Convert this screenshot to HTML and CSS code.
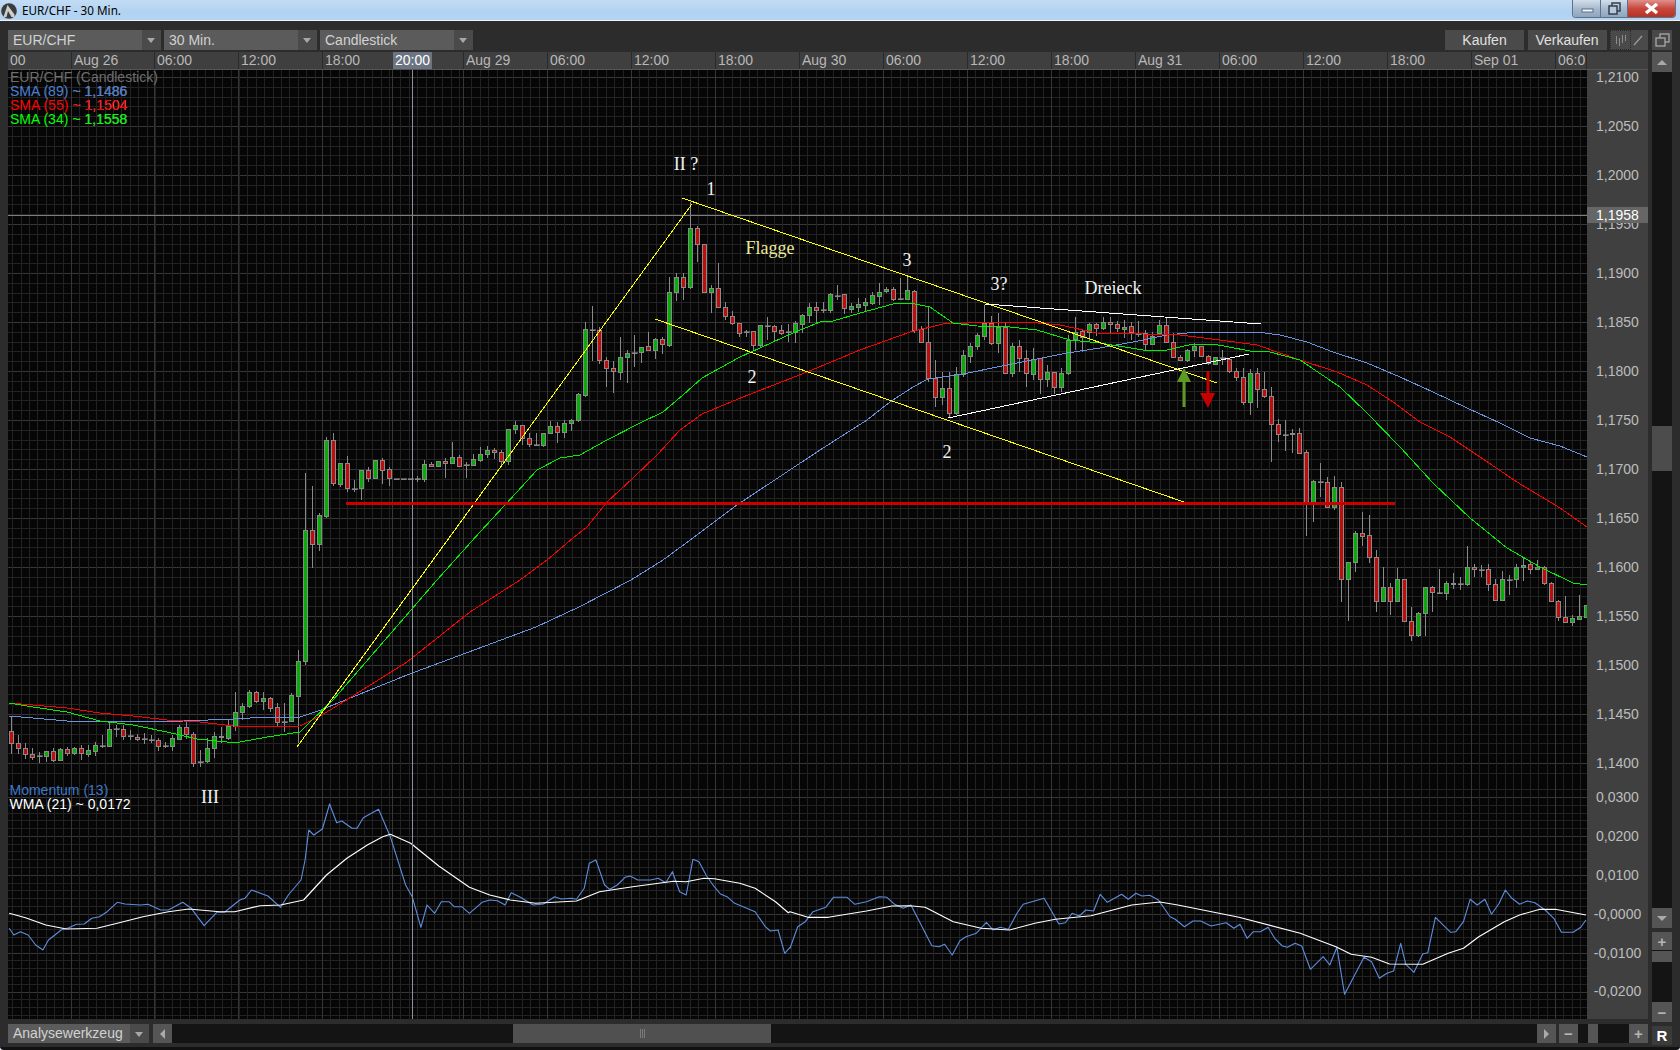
FILE: index.html
```html
<!DOCTYPE html>
<html lang="de">
<head>
<meta charset="utf-8">
<title>EUR/CHF - 30 Min.</title>
<link rel="stylesheet" href="styles.css">
</head>
<body>
<div class="window">
  <header class="titlebar">
    <svg class="logo" viewBox="0 0 16 16" width="16" height="16"><circle cx="8" cy="8" r="7.8" fill="#3c3c3c"/><path d="M2.5 14 L6.5 2 L13.5 11.5 L13.5 14 L10.5 14 L7 8 L5.5 14 Z" fill="#cfcfcf"/></svg>
    <span class="title-text">EUR/CHF - 30 Min.</span>
    <div class="win-buttons">
      <div class="win-btn win-min"><svg viewBox="0 0 28 17" width="28" height="17"><rect x="9" y="9" width="11" height="3" fill="#f4f7fb" stroke="#5b6d82"/></svg></div>
      <div class="win-btn win-max"><svg viewBox="0 0 27 17" width="27" height="17"><rect x="11" y="3" width="8" height="8" fill="none" stroke="#33404f" stroke-width="1.5"/><rect x="8" y="6" width="8" height="8" fill="#b8c8dc" stroke="#33404f" stroke-width="1.5"/></svg></div>
      <div class="win-btn win-close"><svg viewBox="0 0 47 17" width="47" height="17"><path d="M18 4 L29 13 M29 4 L18 13" stroke="#fff" stroke-width="3.4"/></svg></div>
    </div>
  </header>

  <div class="frame">
    <main class="main-col">
      <div class="toolbar">
        <div class="select"><span class="select-value">EUR/CHF</span><span class="select-arrow"></span></div>
        <div class="select"><span class="select-value">30 Min.</span><span class="select-arrow"></span></div>
        <div class="select"><span class="select-value">Candlestick</span><span class="select-arrow"></span></div>
        <div class="toolbar-space"></div>
        <button class="action-btn">Kaufen</button>
        <button class="action-btn">Verkaufen</button>
        <div class="mode-group">
          <span class="mode mode-on"><svg viewBox="0 0 20 20" width="20" height="20"><path d="M6.5 6v8M9.5 8v8M12.5 5v8M15.5 5v6" stroke="#8c8c8c"/></svg></span>
          <span class="mode"><svg viewBox="0 0 16 20" width="16" height="20"><path d="M3 15 L11 6" stroke="#9a9a9a" stroke-width="1.3"/></svg></span>
        </div>
      </div>

      <section class="chart">
        <div class="timebar">
          <div class="time-cells">
            <span class="tc tc-first">00</span>
            <span class="tc tc-83">Aug 26</span>
            <span class="tc">06:00</span>
            <span class="tc">12:00</span>
            <span class="tc tc-wide">18:00</span>
            <span class="tc">Aug 29</span>
            <span class="tc">06:00</span>
            <span class="tc">12:00</span>
            <span class="tc">18:00</span>
            <span class="tc">Aug 30</span>
            <span class="tc">06:00</span>
            <span class="tc">12:00</span>
            <span class="tc">18:00</span>
            <span class="tc">Aug 31</span>
            <span class="tc">06:00</span>
            <span class="tc">12:00</span>
            <span class="tc">18:00</span>
            <span class="tc">Sep 01</span>
            <span class="tc tc-last">06:0</span>
          </div>
          <span class="cross-time">20:00</span>
        </div>

        <div class="plot">
          <svg id="chart" class="chart-svg" viewBox="8 70 1579 949" width="1579" height="949"></svg>
          <div class="legend legend-price">
            <div class="lg-grey">EUR/CHF (Candlestick)</div>
            <div class="lg-blue">SMA (89) <span class="lg-val">~ 1,1486</span></div>
            <div class="lg-red">SMA (55) <span class="lg-val">~ 1,1504</span></div>
            <div class="lg-green">SMA (34) <span class="lg-val">~ 1,1558</span></div>
          </div>
          <div class="legend legend-mom">
            <div class="lg-mom">Momentum (13)</div>
            <div class="lg-white">WMA (21) ~ 0,0172</div>
          </div>
          <span class="note note-ii">II ?</span>
          <span class="note note-1">1</span>
          <span class="note note-flagge">Flagge</span>
          <span class="note note-3">3</span>
          <span class="note note-3q">3?</span>
          <span class="note note-dreieck">Dreieck</span>
          <span class="note note-2a">2</span>
          <span class="note note-2b">2</span>
          <span class="note note-iii">III</span>
        </div>

        <aside class="axis">
          <div class="tick">1,2100</div><div class="tick">1,2050</div><div class="tick">1,2000</div>
          <div class="tick">1,1950</div><div class="tick">1,1900</div><div class="tick">1,1850</div>
          <div class="tick">1,1800</div><div class="tick">1,1750</div><div class="tick">1,1700</div>
          <div class="tick">1,1650</div><div class="tick">1,1600</div><div class="tick">1,1550</div>
          <div class="tick">1,1500</div><div class="tick">1,1450</div><div class="tick tick-end">1,1400</div>
          <div class="tick-mom tick-mom-first">0,0300</div><div class="tick-mom">0,0200</div>
          <div class="tick-mom">0,0100</div><div class="tick-mom">-0,0000</div>
          <div class="tick-mom">-0,0100</div><div class="tick-mom">-0,0200</div>
          <span class="cross-price">1,1958</span>
        </aside>
      </section>

      <div class="bottombar">
        <div class="select select-tool"><span class="select-value">Analysewerkzeug</span><span class="select-arrow"></span></div>
        <span class="sq-btn"><i class="tri tri-left"></i></span>
        <div class="h-track"><div class="h-thumb"><i class="grip"></i></div></div>
        <span class="sq-btn"><i class="tri tri-right"></i></span>
        <span class="sq-btn sq-sign">−</span>
        <div class="mini-track"><div class="mini-thumb"></div></div>
        <span class="sq-btn sq-sign">+</span>
      </div>
    </main>

    <aside class="rail">
      <span class="rail-btn rail-restore"><svg viewBox="0 0 20 20" width="20" height="20"><rect x="8" y="4" width="9" height="8" fill="none" stroke="#a8a8a8" stroke-width="1.3"/><rect x="4" y="8" width="9" height="8" fill="#484848" stroke="#a8a8a8" stroke-width="1.3"/></svg></span>
      <span class="rail-btn rail-up"><i class="tri tri-up"></i></span>
      <div class="v-track"><div class="v-thumb"></div></div>
      <span class="rail-btn rail-down"><i class="tri tri-down"></i></span>
      <span class="rail-btn rail-plus sq-sign">+</span>
      <div class="zoom-track"><div class="zoom-thumb"></div></div>
      <span class="rail-btn sq-sign">−</span>
      <span class="rail-btn rail-r">R</span>
    </aside>
  </div>
</div>
<script src="chart.js"></script>
</body>
</html>
```
FILE: styles.css
```css
* { box-sizing: border-box; }
html, body { margin: 0; padding: 0; height: 100%; background: #dfe9f5; overflow: hidden; }
body { font-family: "Liberation Sans", Arial, sans-serif; font-size: 14px; }
.window { width: 1680px; height: 1050px; display: flex; flex-direction: column; }

.titlebar { height: 21px; flex: none; display: flex; align-items: flex-start; position: relative;
  background: linear-gradient(#c3dcf5, #b1d2f1 60%, #b6d5f2); border-bottom: 1px solid #eef4fb; }
.logo { margin: 3px 0 0 1px; flex: none; }
.title-text { font-family: "Noto Sans", sans-serif; font-size: 11.7px; line-height: 20px; margin-left: 5px; color: #000; }
.win-buttons { margin-left: auto; margin-right: 4px; display: flex; height: 18px;
  border: 1px solid #5f7288; border-top: 0; border-radius: 0 0 4px 4px; overflow: hidden; }
.win-btn { height: 17px; display: block; flex: none; }
.win-btn svg { display: block; }
.win-min { background: linear-gradient(#d3dfec, #a7bacf 50%, #8ea5bd); border-right: 1px solid #5f7288; width: 28px; }
.win-max { background: linear-gradient(#d3dfec, #a7bacf 50%, #8ea5bd); border-right: 1px solid #5f7288; width: 27px; }
.win-close { background: linear-gradient(#e0908a, #c8473d 50%, #b53225); width: 47px; }

.frame { flex: 1; display: flex; gap: 4px; padding: 9px 8px 0 8px; background: #2c2c2c;
  border-radius: 0 0 4px 4px; border-bottom: 3px solid #111; min-height: 0; }
.main-col { width: 1640px; display: flex; flex-direction: column; flex: none; }

.toolbar { height: 20px; display: flex; gap: 3.5px; flex: none; margin-bottom: 2px; }
.select { width: 152.5px; height: 20px; display: flex; background: #5b5b5b; color: #d2d2d2; flex: none; }
.select-value { flex: 1; padding-left: 5px; line-height: 20px; white-space: nowrap; overflow: hidden; }
.select-arrow { width: 19px; background: #4a4a4a; position: relative; flex: none; }
.select-arrow::after { content: ""; position: absolute; left: 5px; top: 8px; border: 4px solid transparent; border-top: 5px solid #a8a8a8; border-bottom: 0; }
.toolbar-space { flex: 1; }
.action-btn { width: 79px; height: 20px; padding: 0; border: 0; background: #4a4a4a; color: #e0e0e0;
  font: 14px/20px "Liberation Sans", Arial, sans-serif; }
.mode-group { width: 38px; height: 20px; display: flex; background: #4a4a4a; }
.mode { height: 20px; display: block; }
.mode svg { display: block; }
.mode-on { width: 21px; outline: 1px dotted #2a2a2a; outline-offset: -1px; }

.chart { display: grid; grid-template-columns: 1579px 61px; grid-template-rows: 17px 949px; row-gap: 1px; background: #555; flex: none; }
.timebar { grid-column: 1 / 3; background: #3f3f3f; position: relative; color: #b8b8b8; overflow: hidden; }
.time-cells { width: 1579px; display: flex; }
.tc { width: 84px; height: 17px; flex: none; line-height: 17px; padding-left: 2px; border-left: 1px solid #2a2a2a; white-space: nowrap; }
.tc-first { width: 63px; border-left: 0; }
.tc-83 { width: 83px; }
.tc-wide { width: 141px; }
.tc-last { width: 32px; border-right: 1px solid #2a2a2a; }
.cross-time { position: absolute; left: 385px; top: 0; width: 39px; height: 17px; line-height: 17px; text-align: center; background: #6b7480; color: #fff; }

.plot { position: relative; width: 1579px; height: 949px; background: #060606; overflow: hidden; }
.chart-svg { display: block; }
.axis { position: relative; background: #404040; color: #bdbdbd; text-align: center; overflow: hidden; }
.tick { height: 49px; line-height: 14px; }
.tick-end { height: 14px; margin-bottom: 20px; }
.tick-mom { height: 38.9px; line-height: 14px; }
.cross-price { position: absolute; left: 0; right: 0; top: 137px; height: 16px; line-height: 16px; background: #666; color: #fff; }

.g-minor { stroke: #222222; stroke-width: 1; shape-rendering: crispEdges; }
.g-major { stroke: #363636; stroke-width: 1; shape-rendering: crispEdges; }
.cross { stroke: #8b929c; stroke-width: 1; shape-rendering: crispEdges; }
.cross-h { stroke: #7d7d7d; stroke-width: 1; shape-rendering: crispEdges; }
.wick { stroke: #8a8a8a; stroke-width: 1; shape-rendering: crispEdges; }
.body-g { fill: #07ad07; stroke: #8a8a8a; stroke-width: 1; shape-rendering: crispEdges; }
.body-r { fill: #bd0d0d; stroke: #8a8a8a; stroke-width: 1; shape-rendering: crispEdges; }
.body-d { fill: #8a8a8a; stroke: #8a8a8a; stroke-width: .6; shape-rendering: crispEdges; }
.ln { fill: none; stroke-width: 1; shape-rendering: crispEdges; stroke-linejoin: round; }
.ln-blue { stroke: #6a93dc; }
.ln-red { stroke: #ff0000; }
.ln-green { stroke: #00f000; }
.ln-yellow { stroke: #ffff00; }
.ln-white { stroke: #ffffff; }
.ln-wma { stroke: #ffffff; stroke-width: 1.15; shape-rendering: auto; }
.ln-mom { stroke: #5f8ede; shape-rendering: auto; stroke-width: 1.1; }
.hline-red { stroke: #c90000; stroke-width: 3; shape-rendering: crispEdges; }
.arrow-green { fill: #5c9a26; }
.arrow-red { fill: #c60000; }

.legend { position: absolute; left: 2px; line-height: 14px; white-space: nowrap; }
.legend-price { top: 0; }
.legend-mom { top: 713px; left: 1.5px; }
.lg-grey { color: #6e6e6e; }
.lg-blue { color: #4d80d2; }
.lg-red { color: #ff0000; }
.lg-green { color: #00ff00; }
.lg-val { text-shadow: .5px 0 0 rgba(255,255,255,.45); }
.lg-mom { color: #3f78c9; }
.lg-white { color: #fff; }

.note { position: absolute; font-family: "Liberation Serif", "Times New Roman", serif; font-size: 18px; line-height: 20px; color: #f2f2f2; white-space: nowrap; transform: translate(-50%, -50%); }
.note-ii { left: 678px; top: 94px; }
.note-1 { left: 703px; top: 119px; }
.note-flagge { left: 762px; top: 178px; color: #e9e99c; }
.note-3 { left: 899px; top: 190px; }
.note-3q { left: 991px; top: 214px; }
.note-dreieck { left: 1105px; top: 218px; }
.note-2a { left: 744px; top: 307px; }
.note-2b { left: 939px; top: 382px; }
.note-iii { left: 202px; top: 727px; }

.bottombar { height: 19px; margin-top: 5px; display: flex; flex: none; }
.select-tool { width: 141px; height: 19px; margin-right: 4px; }
.select-tool .select-value { line-height: 19px; }
.sq-btn { width: 19px; height: 19px; background: #555; flex: none; display: flex; align-items: center; justify-content: center; position: relative; }
.sq-sign { color: #b4b4b4; font-weight: bold; font-size: 15px; line-height: 19px; }
.h-track { width: 1365px; height: 19px; background: #141414; padding-left: 341px; flex: none; }
.h-thumb { width: 258px; height: 19px; background: #505050; display: flex; align-items: center; justify-content: center; }
.grip { width: 5px; height: 9px; border-left: 1px solid #7a7a7a; border-right: 1px solid #7a7a7a; position: relative; display: block; }
.grip::after { content: ""; position: absolute; left: 1px; top: 0; width: 1px; height: 9px; background: #7a7a7a; }
.h-track + .sq-btn { margin-right: 3px; }
.mini-track { width: 51px; height: 19px; background: #141414; padding-left: 10px; flex: none; }
.mini-thumb { width: 10px; height: 19px; background: #555; }

.tri { display: block; width: 0; height: 0; border: 5px solid transparent; }
.tri-left { border-left: 0; border-right: 5px solid #aaa; }
.tri-right { border-right: 0; border-left: 5px solid #aaa; }
.tri-up { border-top: 0; border-bottom: 5px solid #aaa; }
.tri-down { border-bottom: 0; border-top: 5px solid #aaa; }

.rail { width: 20px; display: flex; flex-direction: column; flex: none; height: 1013px; }
.rail-btn { width: 20px; height: 20px; flex: none; background: #555; display: flex; align-items: center; justify-content: center; }
.rail-restore { background: #484848; margin-bottom: 2px; }
.v-track { height: 836px; background: #141414; padding-top: 354px; flex: none; }
.v-thumb { height: 45px; background: #4c4c4c; }
.rail-down { margin-bottom: 4px; }
.rail-plus { height: 18px; }
.zoom-track { height: 52px; background: #141414; flex: none; }
.zoom-thumb { height: 11px; margin-top: 1px; background: #555; }
.rail-r { margin-top: 4px; height: 19px; background: #3b3b3b; color: #fff; font-weight: bold; font-size: 15px; }
```
FILE: chart.js
```js
(function () {
  var svg = document.getElementById('chart');
  var out = [];

  function line(x1, y1, x2, y2, cls) {
    out.push('<line x1="' + x1 + '" y1="' + y1 + '" x2="' + x2 + '" y2="' + y2 + '" class="' + cls + '"/>');
  }
  function poly(points, cls) {
    out.push('<polyline points="' + points.map(function (p) { return p[0] + ',' + p[1]; }).join(' ') + '" class="ln ' + cls + '"/>');
  }

  /* grid */
  var L = 8, R = 1587, T = 70, B = 1019, SPLIT = 782;
  var n, y, x;
  for (n = -1; ; n++) {
    y = 77 + n * 9.8;
    if (y > SPLIT) break;
    line(L, Math.round(y) + .5, R, Math.round(y) + .5, n % 5 === 0 ? 'g-major' : 'g-minor');
  }
  for (n = -1; ; n++) {
    y = 797 + n * 7.78;
    if (y > B) break;
    line(L, Math.round(y) + .5, R, Math.round(y) + .5, n % 5 === 0 ? 'g-major' : 'g-minor');
  }
  var ticks = [71, 154, 238, 322];
  for (x = 463; x < R; x += 84) ticks.push(x);
  function vminor(from, to) {
    for (var v = from; v < to; v += 8.4) line(Math.round(v) + .5, T, Math.round(v) + .5, B, 'g-minor');
  }
  vminor(71 - 8.4 * 7, 322);
  vminor(322, 392);
  vminor(392, 463);
  vminor(463, R);
  line(392.5, T, 392.5, B, 'g-major');
  ticks.forEach(function (t) { line(t + .5, T, t + .5, B, 'g-major'); });

  /* candles: each entry is "colour high top bottom low" in crop pixels (3x) */
  function seg(x0, base, text) {
    text.split(';').forEach(function (row, i) {
      var p = row.trim().split(' ');
      var c = p[0];
      var hi = base + p[1] / 3, top = base + p[2] / 3, bot = base + p[3] / 3, lo = base + p[4] / 3;
      var cx = Math.floor(x0 + 7 * i) + .5;
      if (cx > R) return;
      line(cx, Math.round(hi), cx, Math.round(lo), 'wick');
      var ty = Math.round(top) + .5, h = Math.max(Math.round(bot) - Math.round(top), 1);
      if (c === 'd') {
        out.push('<rect x="' + (cx - 2.5) + '" y="' + ty + '" width="5" height="1" class="body-d"/>');
      } else {
        out.push('<rect x="' + (cx - 2) + '" y="' + ty + '" width="4" height="' + h + '" class="body-' + c + '"/>');
      }
    });
  }

  seg(11.33, 680, 'r 110 153 190 222;r 165 190 204 222;r 190 203 223 237;r 205 223 231 240;d 215 226 229 248;g 212 214 227 245;r 205 213 239 245;g 205 208 240 243;r 200 208 218 228;g 200 205 218 225;r 195 205 220 240;g 195 211 221 230;g 185 194 212 228;d 165 194 197 205;g 130 148 197 200;d 135 144 148 170;r 135 146 169 180;d 150 166 169 180;r 162 170 176 182;d 158 175 178 192;d 165 178 181 190;r 175 181 199 212;d 185 196 199 205;g 165 175 197 212;g 135 142 176 180;r 125 142 162 178;r 155 161 248 262;d 210 243 246 260;g 175 203 244 250;g 155 167 203 235;r 140 167 172 190;g 120 137 174 180;g 37 97 137 152;g 70 79 97 120;g 30 37 79 85;r 33 37 64 70;g 35 55 64 90;r 50 55 83 95;r 70 82 127 140;d 70 122 127 155;g 40 46 122 125;g -90 -57 47 190');

  seg(305.33, 300, 'g 520 690 1083 1095;r 558 690 733 805;g 640 645 733 752;g 412 420 648 655;r 400 420 550 558;g 488 490 552 560;r 468 490 565 575;d 540 565 568 575;g 510 511 565 600;r 502 511 533 545;g 480 481 533 533;r 474 481 510 552;r 500 508 535 558;d 535 535 535 535;d 535 535 535 535;d 535 535 535 535;d 528 535 535 545;g 480 493 537 545;r 487 493 498 498;g 483 484 499 500;r 475 484 490 533;g 427 472 490 490;r 465 472 497 500;d 485 492 495 533;g 462 478 494 498;g 442 463 480 487;g 438 451 463 473;r 445 451 457 476;r 450 457 482 495;g 388 388 482 495;g 363 375 388 402;r 375 376 415 435;r 400 415 433 440;d 400 433 435 437;g 400 400 434 440;g 363 379 400 402;r 365 379 395 428;g 360 370 395 413;g 358 361 370 392;g 280 283 361 365;g 65 88 284 292;d 18 88 91 182;r 80 91 181 193;r 170 181 203 260;r 183 203 214 278;g 110 170 215 240;g 150 160 170 248;d 105 157 160 200;g 140 140 157 188;r 95 139 151 151;g 113 118 151 176;r 110 118 133 162');

  seg(669.33, 190, 'g 262 305 465 470;g 250 262 305 332;r 250 262 290 330;g 35 115 290 298;r 108 115 163 215;r 163 163 305 308;g 285 295 305 368;r 220 295 352 352;r 335 352 377 390;r 362 377 400 405;r 398 400 428 440;d 420 424 427 440;r 422 424 465 480;g 405 406 465 470;d 382 405 408 450;r 405 407 422 452;r 405 421 428 435;d 403 424 427 455;g 393 400 427 458;g 372 376 401 430;g 338 352 376 400;r 335 352 360 398;d 335 358 362 370;g 308 313 360 370;d 285 314 316 330;r 313 313 355 372;g 340 349 357 370;g 325 343 351 367;g 323 337 344 365;g 305 316 338 345;g 280 305 317 345;g 290 298 304 308;r 290 298 327 333;d 265 325 328 330;g 258 300 326 330;r 300 302 420 430;r 408 417 455 458;r 350 455 565 575;r 510 565 620 650;g 545 595 620 645;r 545 595 670 680;g 530 553 670 675;g 480 495 553 560;g 460 469 497 520;g 430 435 469 480;g 345 400 437 450;r 378 398 460 465;g 370 411 460 490;r 400 412 548 550;g 460 469 548 560;r 450 469 503 545;r 480 503 550 590;g 475 507 552 570;r 505 505 568 612;g 525 547 568 590;r 545 547 590 612;g 535 550 590 605;g 435 450 550 555;g 380 426 448 480;r 420 424 440 485;g 400 403 425 455;r 400 403 414 438;g 382 397 415 420;r 380 397 403 430;r 392 403 415 425;g 390 410 416 445;r 395 409 427 450;d 392 428 430 440;r 420 428 462 480;g 425 437 462 465;g 390 406 430 435;r 385 406 455 460;r 430 455 500 505');

  seg(1180.33, 300, 'r 165 170 180 182;g 147 150 180 185;g 130 138 151 170;r 138 138 167 170;r 165 167 190 195;g 170 172 193 195;d 150 172 176 195;r 175 177 212 218;r 205 212 230 242;r 205 230 305 315;g 207 220 305 345;r 205 220 268 325;r 215 268 288 295;r 262 287 373 485;r 358 373 403 425;d 360 402 405 452;g 388 398 403 458;r 385 398 458 460;r 450 457 605 707;g 540 544 605 665;d 490 544 548 590;r 530 547 622 625;g 528 562 622 630;r 545 562 838 905;g 785 787 838 962;g 693 700 787 815;r 636 700 707 738;r 645 706 772 788;r 750 772 902 935;g 802 862 902 905;r 850 862 902 945;g 805 838 902 905;r 838 838 962 965;r 922 962 1004 1022;g 935 940 1004 1012;g 860 862 940 1007;r 857 862 877 935;d 808 877 880 880;g 843 848 880 900;r 820 848 853 868;d 832 850 853 870;g 738 800 852 858;r 792 800 808 830;d 795 807 809 830;r 792 808 853 872;r 838 853 900 902;g 812 838 900 902;d 825 838 840 885;g 793 802 838 865;g 775 794 802 843;r 785 793 808 822;g 780 800 808 808;r 797 800 850 855;r 845 850 902 905');

  seg(1558.33, 480, 'r 360 362 412 422;r 348 412 425 428;g 405 415 425 437;g 345 408 416 418;g 375 375 410 410');

  /* moving averages */
  poly([[9,716],[33,718],[67,721],[100,721],[147,721],[183,721],[233,719],[267,717],[300,717],[321,710],[333,705],[407,675],[536,627],[579,607],[631,580],[663,560],[697,535],[737,505],[820,450],[867,420],[890,402],[913,387],[928,379],[963,374],[1007,365],[1027,361],[1067,353],[1100,348],[1133,342],[1167,335],[1197,332],[1233,332],[1257,332],[1280,335],[1307,342],[1333,352],[1367,363],[1400,377],[1433,392],[1467,408],[1500,423],[1530,438],[1560,446],[1587,457]], 'ln-blue');
  poly([[9,703],[33,705],[67,708],[100,713],[133,716],[167,720],[200,722],[233,726],[267,727],[300,726],[320,716],[340,704],[407,662],[470,612],[520,580],[547,560],[573,538],[587,527],[607,502],[633,478],[657,455],[680,430],[702,414],[743,397],[807,372],[860,350],[910,332],[943,324],[993,322],[1027,322],[1060,325],[1097,333],[1143,334],[1180,335],[1220,340],[1257,345],[1300,360],[1337,372],[1367,385],[1393,402],[1420,422],[1450,437],[1483,459],[1517,482],[1560,508],[1587,527]], 'ln-red');
  poly([[9,703],[33,707],[67,712],[100,721],[133,725],[167,732],[197,739],[227,742],[240,742],[267,737],[300,732],[310,722],[333,700],[437,580],[480,532],[517,492],[537,470],[560,458],[580,455],[607,440],[640,423],[663,412],[683,395],[702,378],[740,357],[793,333],[820,322],[833,321],[860,313],[893,304],[910,303],[930,307],[953,323],[977,326],[1010,327],[1037,330],[1070,340],[1100,343],[1143,350],[1167,350],[1193,344],[1213,344],[1250,351],[1270,352],[1300,360],[1340,387],[1367,413],[1400,447],[1433,483],[1470,518],[1507,548],[1540,567],[1573,583],[1587,585]], 'ln-green');

  /* momentum pane: points read from 1.96x / 3x crops */
  function crop(x0, y0, s) {
    return s.map(function (p) { return [+(x0 + p[0] / 1.96).toFixed(1), +(y0 + p[1] / 3).toFixed(1)]; });
  }
  var momA = crop(0, 780, [[18,445],[27,465],[40,455],[55,465],[70,495],[84,510],[95,480],[120,450],[135,443],[150,433],[165,432],[180,415],[195,410],[210,395],[230,367],[245,372],[275,375],[290,373],[315,390],[330,390],[358,367],[375,385],[400,437],[425,397],[440,397],[470,360],[480,355],[493,330],[525,348],[550,382],[565,345],[590,300],[598,240],[605,150],[615,165],[632,147],[646,72],[660,128],[670,123],[690,145],[700,145],[712,113],[742,88],[765,170],[795,315],[808,350],[825,442],[837,375],[852,400],[865,365],[880,365],[890,380],[905,380],[920,400],[945,367],[960,360],[975,362],[990,375],[1002,338],[1020,352],[1045,375],[1065,372],[1087,350],[1100,357],[1120,355],[1130,358],[1145,325],[1155,250],[1168,240],[1185,315],[1195,328],[1210,315],[1225,292],[1235,288],[1250,300],[1275,300],[1290,295],[1305,308],[1318,275],[1332,335],[1345,345],[1358,238],[1370,245],[1385,288],[1400,320],[1412,342],[1425,350],[1440,370],[1480,395],[1500,440],[1510,453],[1525,450],[1538,520],[1548,503]]);
  var momB = crop(790, 820, [[0,385],[15,320],[30,305],[45,275],[70,262],[85,232],[112,232],[127,253],[150,245],[175,230],[190,232],[205,253],[222,265],[237,255],[278,377],[292,380],[303,373],[318,405],[333,362],[345,350],[365,340],[385,307],[398,330],[412,322],[428,328],[445,280],[457,253],[498,235],[527,312],[540,308],[553,280],[567,288],[580,270],[595,273],[608,223],[622,247],[650,223],[663,238],[678,220],[690,228],[705,226],[722,240],[745,290],[755,298],[773,320],[790,303],[805,303],[825,318],[855,308],[870,325],[882,313],[896,355],[908,335],[922,335],[937,322],[950,355],[965,378],[975,382],[990,370],[1003,378],[1020,448],[1045,410],[1058,435],[1072,382],[1087,523],[1125,412],[1140,425],[1155,475],[1170,460],[1183,453],[1197,370],[1207,433],[1223,457],[1240,402],[1250,398],[1265,292],[1295,337],[1305,335],[1320,305],[1333,238],[1347,255],[1362,238],[1375,283],[1390,250],[1402,210],[1415,235],[1430,253],[1445,243],[1460,248],[1480,270],[1497,295],[1512,337],[1535,337],[1550,322],[1560,300]]);
  poly(momA.concat(momB), 'ln-mom');

  var wmaA = crop(0, 780, [[18,400],[50,413],[90,435],[130,447],[190,445],[230,430],[280,410],[330,395],[370,387],[430,395],[460,395],[510,377],[550,375],[595,360],[640,285],[680,235],[720,195],[750,170],[765,163],[805,190],[860,258],[920,322],[960,345],[1000,360],[1050,370],[1130,363],[1175,335],[1240,320],[1320,304],[1345,305],[1380,295],[1400,296],[1450,310],[1480,325],[1520,365],[1545,398]]);
  var wmaB = crop(790, 820, [[0,275],[35,292],[75,292],[150,273],[200,258],[235,257],[265,262],[320,305],[375,325],[430,330],[480,310],[520,298],[590,287],[670,255],[725,246],[760,255],[880,292],[1000,340],[1070,380],[1100,403],[1140,412],[1175,432],[1240,433],[1290,400],[1320,385],[1350,350],[1400,305],[1430,285],[1470,268],[1500,268],[1560,285]]);
  poly(wmaA.concat(wmaB), 'ln-wma');

  /* crosshair */
  line(412.5, T, 412.5, B, 'cross');
  line(L, 215.5, R, 215.5, 'cross-h');

  /* drawn analysis lines */
  poly([[297,747],[692,204]], 'ln-yellow');
  poly([[682,198],[1217,383]], 'ln-yellow');
  poly([[655,319],[1184,502]], 'ln-yellow');
  poly([[985,304],[1261,324]], 'ln-white');
  poly([[948,418],[1249,354]], 'ln-white');
  line(346, 503, 1395, 503, 'hline-red');
  out.push('<path d="M1184 368 L1191 382 L1185.5 382 L1185.5 407 L1182.5 407 L1182.5 382 L1177 382 Z" class="arrow-green"/>');
  out.push('<path d="M1208 408 L1215 393 L1209.5 393 L1209.5 371 L1206.5 371 L1206.5 393 L1200 393 Z" class="arrow-red"/>');

  svg.innerHTML = out.join('');
})();
```
